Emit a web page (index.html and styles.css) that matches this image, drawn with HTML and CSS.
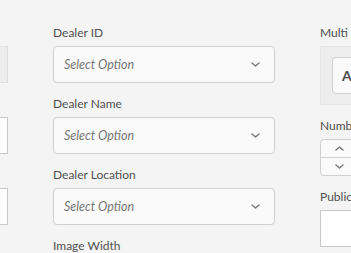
FILE: index.html
```html
<!DOCTYPE html>
<html lang="en">
<head>
    <meta charset="UTF-8">
    <title>Dealer Settings</title>
    <link rel="stylesheet" href="styles.css">
</head>
<body>
    <div class="form-grid">
        <!-- 左列（标签在可视区域外） -->
        <div class="column">
            <div class="field">
                <label class="field-label"></label>
                <input class="text-input disabled" type="text" disabled>
            </div>
            <div class="field">
                <label class="field-label"></label>
                <input class="text-input" type="text">
            </div>
            <div class="field">
                <label class="field-label"></label>
                <input class="text-input" type="text">
            </div>
        </div>

        <!-- 中列 -->
        <div class="column">
            <div class="field">
                <label class="field-label">Dealer ID</label>
                <div class="select">
                    <span class="select-text">Select Option</span>
                    <svg class="chevron" width="9" height="5" viewBox="0 0 9 5"><path d="M1 1l3.5 3 3.5-3" fill="none" stroke="currentColor" stroke-width="1.5" stroke-linecap="round" stroke-linejoin="round"/></svg>
                </div>
            </div>
            <div class="field">
                <label class="field-label">Dealer Name</label>
                <div class="select">
                    <span class="select-text">Select Option</span>
                    <svg class="chevron" width="9" height="5" viewBox="0 0 9 5"><path d="M1 1l3.5 3 3.5-3" fill="none" stroke="currentColor" stroke-width="1.5" stroke-linecap="round" stroke-linejoin="round"/></svg>
                </div>
            </div>
            <div class="field">
                <label class="field-label">Dealer Location</label>
                <div class="select">
                    <span class="select-text">Select Option</span>
                    <svg class="chevron" width="9" height="5" viewBox="0 0 9 5"><path d="M1 1l3.5 3 3.5-3" fill="none" stroke="currentColor" stroke-width="1.5" stroke-linecap="round" stroke-linejoin="round"/></svg>
                </div>
            </div>
            <div class="field">
                <label class="field-label">Image Width</label>
            </div>
        </div>

        <!-- 右列 -->
        <div class="column">
            <div class="field">
                <label class="field-label">Multi Select</label>
                <div class="multi-panel">
                    <button class="multi-btn">Add</button>
                </div>
            </div>
            <div class="field">
                <label class="field-label">Number of Items</label>
                <div class="stepper">
                    <div class="step-btn">
                        <svg width="9" height="5" viewBox="0 0 9 5"><path d="M1 4l3.5-3 3.5 3" fill="none" stroke="currentColor" stroke-width="1.5" stroke-linecap="round" stroke-linejoin="round"/></svg>
                    </div>
                    <div class="step-btn">
                        <svg width="9" height="5" viewBox="0 0 9 5"><path d="M1 1l3.5 3 3.5-3" fill="none" stroke="currentColor" stroke-width="1.5" stroke-linecap="round" stroke-linejoin="round"/></svg>
                    </div>
                </div>
            </div>
            <div class="field">
                <label class="field-label">Publication Date</label>
                <input class="text-input" type="text">
            </div>
        </div>
    </div>
</body>
</html>
```

FILE: styles.css
```css
:root {
    --bg: #f4f4f4;
    --text: #505050;
    --muted: #767676;
    --border: #d0d0d0;
}

* {
    margin: 0;
    padding: 0;
    box-sizing: border-box;
}

body {
    font-family: Lato, "Open Sans", sans-serif;
    background: var(--bg);
    color: var(--text);
    overflow: hidden;
}

.form-grid {
    display: grid;
    grid-template-columns: 222px 222px 222px;
    gap: 45px;
    margin-left: -214px;
    padding-top: 24px;
}

.field {
    display: flex;
    flex-direction: column;
    margin-bottom: 12px;
}

.field-label {
    font-size: 12px;
    line-height: 18px;
    height: 18px;
    margin-bottom: 4px;
    white-space: nowrap;
    color: var(--text);
}

.text-input {
    height: 37px;
    width: 100%;
    border: 1px solid #c9c9c9;
    background: white;
    font: inherit;
}

.text-input.disabled {
    background: #ececec;
    border-color: #dedede;
}

.select {
    height: 37px;
    display: flex;
    align-items: center;
    justify-content: space-between;
    padding: 0 14px 0 10px;
    border: 1px solid var(--border);
    border-radius: 4px;
    background: #fafafa;
}

.select-text {
    font-size: 12.5px;
    font-style: italic;
    color: var(--muted);
}

.chevron {
    color: #7a7a7a;
}

.multi-panel {
    height: 59px;
    padding: 10px 11px;
    background: #ededed;
    border: 1px solid #e6e6e6;
}

.multi-btn {
    height: 37px;
    width: 100px;
    text-align: left;
    padding-left: 9px;
    border: 1px solid #d0d0d0;
    border-radius: 4px;
    background: #fafafa;
    font-family: inherit;
    font-size: 14px;
    font-weight: bold;
    color: #4b4b4b;
}

.stepper {
    width: 38px;
    height: 37px;
    border: 1px solid var(--border);
    border-radius: 4px;
    background: #fafafa;
    display: flex;
    flex-direction: column;
}

.step-btn {
    flex: 1;
    display: flex;
    align-items: center;
    justify-content: center;
    color: #7a7a7a;
}

.step-btn + .step-btn {
    border-top: 1px solid var(--border);
}
```
